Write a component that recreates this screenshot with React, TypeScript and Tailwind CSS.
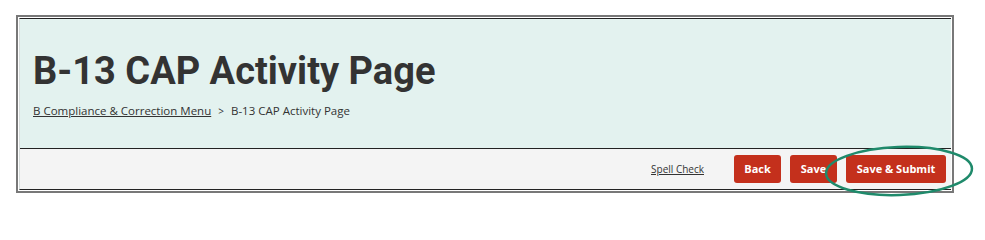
import React from "react";

export default function App() {
  return (
    <div className="w-[985px] h-[209px] bg-white pt-[15px] pl-[16px] relative">
      <div className="w-[938px] h-[178px] border-2 border-[#787878] p-px bg-white">
        <div className="h-full flex flex-col border-y border-[#222] border-l border-l-[#d6dcdb]">
          <div className="h-[129px] bg-[#e3f2ef] pl-[13px] pt-[33px]">
            <h1
              className="text-[38px] leading-[38px] font-bold text-[#333]"
              style={{ fontFamily: "Roboto, 'Liberation Sans', sans-serif" }}
            >
              B-13 CAP Activity Page
            </h1>
            <div
              className="mt-[13px] text-[11.5px] leading-[16px] text-[#333] flex items-center"
              style={{ fontFamily: "'Open Sans', 'Liberation Sans', sans-serif" }}
            >
              <a className="underline text-[#333]">B Compliance &amp; Correction Menu</a>
              <span className="mx-[7px] text-[10px]">&gt;</span>
              <span>B-13 CAP Activity Page</span>
            </div>
          </div>
          <div className="flex-1 border-t border-[#222] bg-[#f4f4f4] flex items-center justify-end pr-[5px]">
            <a
              className="underline text-[10px] text-[#333] mr-[30px]"
              style={{ fontFamily: "'Open Sans', 'Liberation Sans', sans-serif" }}
            >
              Spell Check
            </a>
            <div
              className="flex gap-[9px]"
              style={{ fontFamily: "'Open Sans', 'Liberation Sans', sans-serif" }}
            >
              <button className="h-[28px] w-[47px] rounded-[3px] bg-[#c4301c] text-white text-[11px] font-bold">
                Back
              </button>
              <button className="h-[28px] w-[47px] rounded-[3px] bg-[#c4301c] text-white text-[11px] font-bold">
                Save
              </button>
              <button className="h-[28px] w-[100px] rounded-[3px] bg-[#c4301c] text-white text-[11px] font-bold">
                Save &amp; Submit
              </button>
            </div>
          </div>
        </div>
      </div>
      <svg
        className="absolute left-0 top-0 pointer-events-none"
        width="985"
        height="209"
        viewBox="0 0 985 209"
      >
        <ellipse
          cx="899"
          cy="171"
          rx="73"
          ry="24"
          fill="none"
          stroke="#1f8a6b"
          strokeWidth="2.5"
          transform="rotate(-2 899 171)"
        />
      </svg>
    </div>
  );
}
